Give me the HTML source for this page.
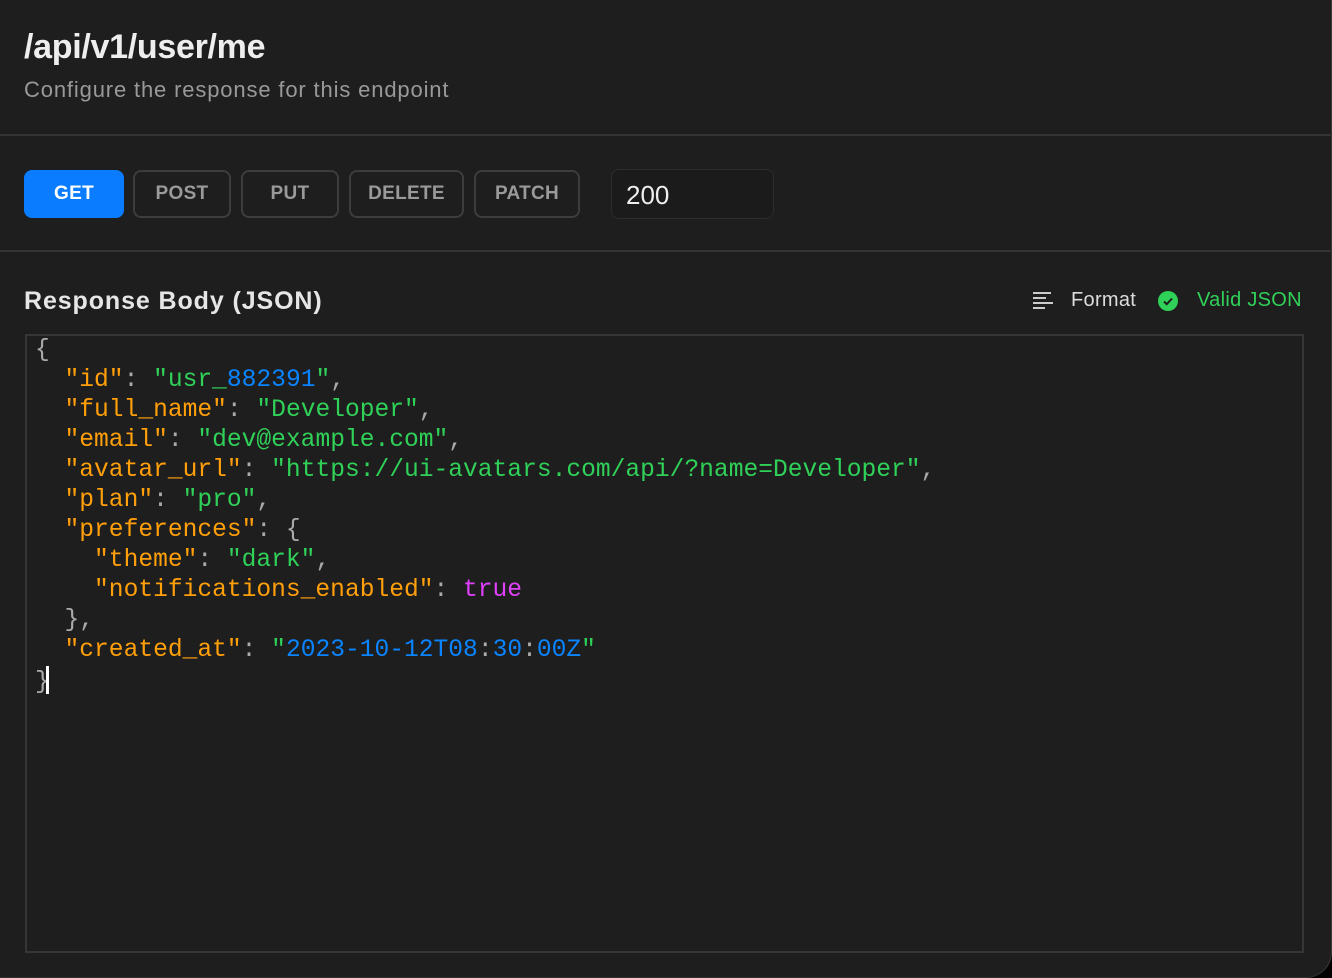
<!DOCTYPE html>
<html><head><style>
*{margin:0;padding:0;box-sizing:border-box}
html,body{width:1332px;height:978px;background:#000;overflow:hidden}
.app{position:absolute;left:0;top:0;width:1332px;height:978px;background:#1e1e1e;border-bottom-right-radius:26px;border-right:1px solid #3a3a3a;border-bottom:1px solid #333;font-family:"Liberation Sans",sans-serif}
h1{position:absolute;left:24px;top:28px;font-size:34px;font-weight:bold;color:#eee;letter-spacing:-0.3px}
.sub{position:absolute;left:24px;top:77px;font-size:22px;color:#999;letter-spacing:0.85px}
.div{position:absolute;left:0;width:1332px;height:2px;background:#333}
.btn{position:absolute;top:170px;height:48px;border:2px solid #3d3d3d;border-radius:8px;color:#9a9a9a;font-weight:bold;font-size:19px;display:flex;align-items:center;justify-content:center;letter-spacing:0.3px}
.get{background:#0a7cff;border-color:#0a7cff;color:#fff}
.inp{position:absolute;left:611px;top:169px;width:163px;height:50px;border:1px solid #2c2c2c;border-radius:8px;background:#1b1b1b;color:#eee;font-size:26px;padding-left:14px;line-height:50px}
h2{position:absolute;left:24px;top:287px;font-size:25px;font-weight:bold;color:#e6e6e6;letter-spacing:0.9px}
.fmt{position:absolute;left:1071px;top:289px;font-size:20px;color:#ddd;letter-spacing:0.3px}
.valid{position:absolute;left:1197px;top:289px;font-size:20px;color:#30d158;letter-spacing:0.3px}
.ed{position:absolute;left:25px;top:334px;width:1279px;height:619px;border:2px solid #363636;padding:0 0 0 8px;font-family:"Liberation Mono",monospace;font-size:24.6px;line-height:30px;color:#aaa;white-space:pre}
.k{color:#ff9f0a}.s{color:#30d158}.n{color:#0a84ff}.t{color:#e040fb}
.cur{display:inline-block;width:3px;height:28px;background:#fff;vertical-align:-6px;margin-left:-4px}
</style></head><body><div class="app">
<h1>/api/v1/user/me</h1>
<div class="sub">Configure the response for this endpoint</div>
<div class="div" style="top:134px"></div>
<div class="btn get" style="left:24px;width:100px">GET</div>
<div class="btn" style="left:133px;width:98px">POST</div>
<div class="btn" style="left:241px;width:98px">PUT</div>
<div class="btn" style="left:349px;width:115px">DELETE</div>
<div class="btn" style="left:474px;width:106px">PATCH</div>
<div class="inp">200</div>
<div class="div" style="top:250px"></div>
<h2>Response Body (JSON)</h2>
<svg style="position:absolute;left:1032px;top:291px" width="22" height="20" viewBox="0 0 22 20"><g stroke="#ccc" stroke-width="2"><line x1="1" y1="2" x2="19" y2="2"/><line x1="1" y1="7" x2="14" y2="7"/><line x1="1" y1="12" x2="21" y2="12"/><line x1="1" y1="17" x2="13" y2="17"/></g></svg>
<div class="fmt">Format</div>
<svg style="position:absolute;left:1158px;top:291px" width="20" height="20" viewBox="0 0 20 20"><circle cx="10" cy="10" r="10" fill="#30d158"/><path d="M6 10.5l2.7 2.7L14 7.5" stroke="#1e1e1e" stroke-width="2" fill="none"/></svg>
<div class="valid">Valid JSON</div>
<div class="ed">{
  <span class="k">"id"</span>: <span class="s">"usr_</span><span class="n">882391</span><span class="s">"</span>,
  <span class="k">"full_name"</span>: <span class="s">"Developer"</span>,
  <span class="k">"email"</span>: <span class="s">"dev@example.com"</span>,
  <span class="k">"avatar_url"</span>: <span class="s">"https://ui-avatars.com/api/?name=Developer"</span>,
  <span class="k">"plan"</span>: <span class="s">"pro"</span>,
  <span class="k">"preferences"</span>: {
    <span class="k">"theme"</span>: <span class="s">"dark"</span>,
    <span class="k">"notifications_enabled"</span>: <span class="t">true</span>
  },
  <span class="k">"created_at"</span>: <span class="s">"</span><span class="n">2023-10-12T08</span>:<span class="n">30</span>:<span class="n">00Z</span><span class="s">"</span>
}<span class="cur"></span></div>
</div></body></html>
